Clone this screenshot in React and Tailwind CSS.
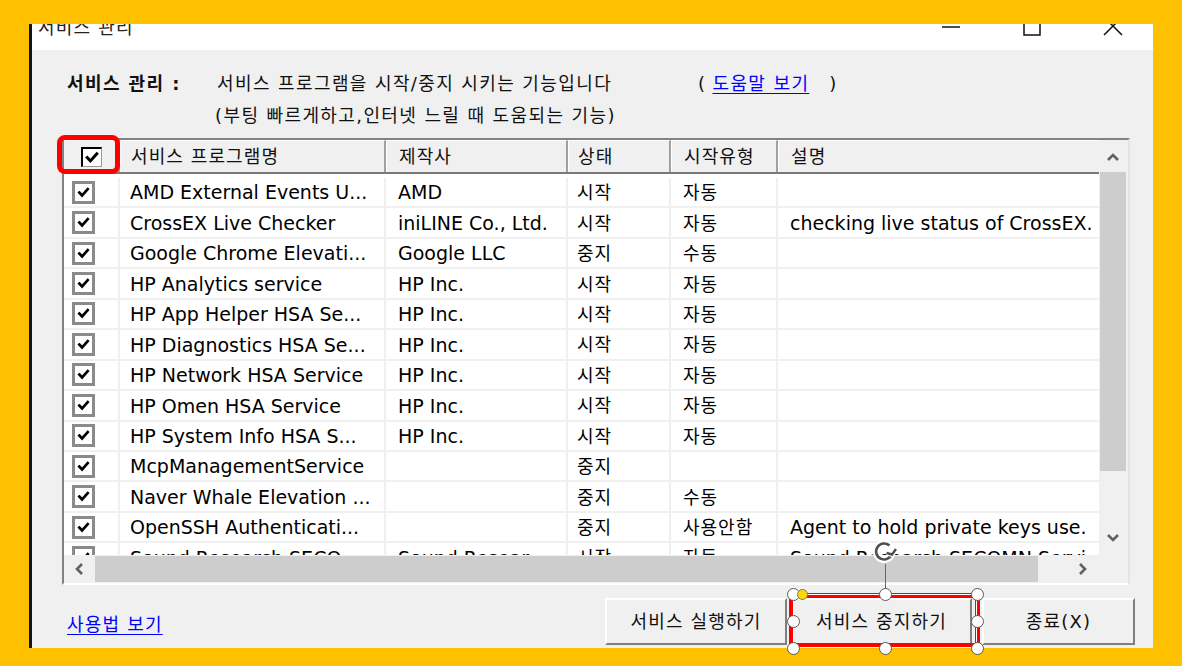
import React from 'react';

const rows = [
  ['AMD External Events U...', 'AMD', '시작', '자동', ''],
  ['CrossEX Live Checker', 'iniLINE Co., Ltd.', '시작', '자동', 'checking live status of CrossEX.'],
  ['Google Chrome Elevati...', 'Google LLC', '중지', '수동', ''],
  ['HP Analytics service', 'HP Inc.', '시작', '자동', ''],
  ['HP App Helper HSA Se...', 'HP Inc.', '시작', '자동', ''],
  ['HP Diagnostics HSA Se...', 'HP Inc.', '시작', '자동', ''],
  ['HP Network HSA Service', 'HP Inc.', '시작', '자동', ''],
  ['HP Omen HSA Service', 'HP Inc.', '시작', '자동', ''],
  ['HP System Info HSA S...', 'HP Inc.', '시작', '자동', ''],
  ['McpManagementService', '', '중지', '', ''],
  ['Naver Whale Elevation ...', '', '중지', '수동', ''],
  ['OpenSSH Authenticati...', '', '중지', '사용안함', 'Agent to hold private keys use.'],
  ['Sound Research SECO...', 'Sound Resear...', '시작', '자동', 'Sound Research SECOMN Servi...'],
];

// column widths + text inset, same for header and body
const cols = [
  'w-[56px]',
  'w-[266px] pl-[10px]',
  'w-[182px] pl-[12px]',
  'w-[103px] pl-[9px]',
  'w-[107px] pl-[12px]',
  'w-[330px] pl-[12px]',
];
const headers = ['서비스 프로그램명', '제작사', '상태', '시작유형', '설명'];

const Check = () => (
  <svg viewBox="0 0 16 16" className="w-full h-full">
    <path d="M3.5 8 L6.5 11.2 L12.5 4.5" stroke="#000" strokeWidth="2.8" fill="none" strokeLinecap="square" />
  </svg>
);

const RowBox = () => (
  <div className="w-[23px] h-[23px] border-[3px] border-[#8a8a8a] bg-white p-[1px]">
    <Check />
  </div>
);

const Chevron = ({ d, className }) => (
  <svg viewBox="0 0 14 14" className={className}>
    <path d={d} stroke="#606060" strokeWidth="2.6" fill="none" />
  </svg>
);

const Handle = ({ className }) => (
  <div className={`absolute w-[13px] h-[13px] rounded-full bg-white border-[1.5px] border-[#5a5a5a] ${className}`} />
);

const Btn = ({ children, className }) => (
  <button className={`h-[47px] bg-[#f0f0f0] border-t-2 border-l-2 border-white border-r-2 border-b-2 border-r-[#7f7f7f] border-b-[#7f7f7f] text-[18px] tracking-[1.2px] text-[#111] ${className}`}>
    {children}
  </button>
);

export default function App() {
  return (
    <div className="w-[1182px] h-[666px] bg-[#FFC000] pt-[24px] pl-[29px] pr-[29px] pb-[18px] font-['DejaVu_Sans','Noto_Sans_CJK_KR',sans-serif] text-black">
      <div className="h-full flex flex-col border-l-[3px] border-[#141414]">
        {/* title bar, cut at the top */}
        <div className="h-[26px] shrink-0 bg-white flex overflow-hidden">
          <div className="ml-[6px] mt-[-6px] text-[18px] leading-[20px] tracking-[1.2px] text-[#222]">서비스 관리</div>
          <div className="ml-auto flex">
            <div className="w-[81px] flex justify-center">
              <svg viewBox="0 0 20 20" className="w-[20px] h-[20px] mt-[-7px]">
                <path d="M1 10 H19" stroke="#111" strokeWidth="1.5" />
              </svg>
            </div>
            <div className="w-[81px] flex justify-center">
              <svg viewBox="0 0 20 20" className="w-[20px] h-[20px] mt-[-7px]">
                <rect x="2" y="1" width="16" height="17" stroke="#111" strokeWidth="1.5" fill="none" />
              </svg>
            </div>
            <div className="w-[81px] flex justify-center">
              <svg viewBox="0 0 20 20" className="w-[20px] h-[20px] mt-[-7px]">
                <path d="M1 0 L19 18 M19 0 L1 18" stroke="#111" strokeWidth="1.5" />
              </svg>
            </div>
          </div>
        </div>

        {/* body */}
        <div className="flex-1 bg-[#f0f0f0] flex flex-col pt-[18px] pb-[3px]">
          <div className="pl-[35px] text-[18px] leading-[32px] tracking-[1.4px] text-[#111]">
            <div className="flex">
              <span className="w-[150px] font-bold">서비스 관리 :</span>
              <span className="w-[481px]">서비스 프로그램을 시작/중지 시키는 기능입니다</span>
              <span>(</span>
              <a className="ml-[6px] text-[#0000ff] underline underline-offset-[3px]">도움말 보기</a>
              <span className="ml-[20px]">)</span>
            </div>
            <div className="pl-[148px]">(부팅 빠르게하고,인터넷 느릴 때 도움되는 기능)</div>
          </div>

          {/* list view */}
          <div className="relative mt-[6px] ml-[30px] w-[1068px] h-[447px] border-t-2 border-l-2 border-[#828282] border-r-2 border-b-2 border-r-[#e3e3e3] border-b-[#ffffff] flex flex-col">
            <div className="flex h-[415px]">
              <div className="w-[1035px] overflow-hidden flex flex-col">
                <div className="h-[34px] shrink-0 flex border-b-2 border-[#7a7a7a] bg-[#f0f0f0]">
                  <div className={`${cols[0]} shrink-0 flex items-center pl-[17px] border-t border-white border-r-2 border-r-[#a0a0a0]`}>
                    <div className="w-[21px] h-[20px] bg-white border-t-2 border-l-2 border-black border-r border-b border-r-[#9a9a9a] border-b-[#9a9a9a]">
                      <Check />
                    </div>
                  </div>
                  {headers.map((h, i) => (
                    <div key={h} className={`${cols[i + 1]} shrink-0 flex items-center text-[18px] tracking-[1.1px] text-[#111] border-t border-l border-white border-r-2 border-r-[#a0a0a0] whitespace-nowrap`}>
                      {h}
                    </div>
                  ))}
                </div>
                <div className="flex-1 bg-white pt-[4px] overflow-hidden">
                  {rows.map((r, ri) => (
                    <div key={ri} className="h-[30.45px] shrink-0 flex border-b-2 border-[#f0f0f0]">
                      <div className={`${cols[0]} shrink-0 flex items-center pl-[8px] border-r-2 border-[#f0f0f0]`}>
                        <RowBox />
                      </div>
                      {r.map((c, ci) => (
                        <div
                          key={ci}
                          className={`${cols[ci + 1]} shrink-0 flex items-center pt-[1px] whitespace-nowrap overflow-hidden border-r-2 border-[#f0f0f0] ${ci === 2 || ci === 3 ? 'text-[18px] tracking-[1px]' : 'text-[19px]'}`}
                        >
                          {c}
                        </div>
                      ))}
                    </div>
                  ))}
                </div>
              </div>
              {/* vertical scrollbar */}
              <div className="w-[29px] bg-[#f0f0f0] flex flex-col pt-[1px] pr-[2px] pl-[1px]">
                <div className="h-[31px] flex items-center justify-center">
                  <Chevron d="M2 10 L7 5 L12 10" className="w-[14px] h-[14px]" />
                </div>
                <div className="h-[299px] bg-[#cdcdcd]" />
                <div className="flex-1 flex items-end justify-center pb-[10px]">
                  <Chevron d="M2 4 L7 9 L12 4" className="w-[14px] h-[14px]" />
                </div>
              </div>
            </div>
            {/* horizontal scrollbar */}
            <div className="flex h-[28px]">
              <div className="w-[1035px] flex bg-[#f0f0f0] py-[1px]">
                <div className="w-[31px] flex items-center justify-center">
                  <Chevron d="M9 2 L4 7 L9 12" className="w-[14px] h-[14px]" />
                </div>
                <div className="w-[943px] bg-[#cdcdcd]" />
                <div className="flex-1 flex items-center justify-end pr-[10px]">
                  <Chevron d="M5 2 L10 7 L5 12" className="w-[14px] h-[14px]" />
                </div>
              </div>
              <div className="flex-1 bg-[#f0f0f0]" />
            </div>
            {/* red highlight around the header checkbox */}
            <div className="absolute left-[-7px] top-[-5px] w-[63px] h-[39px] border-[5px] border-[#ff0000] rounded-[8px]" />
          </div>

          {/* bottom bar */}
          <div className="mt-[13px] h-[47px] flex items-start pl-[35px] pr-[18px]">
            <a className="mt-[15px] text-[18px] leading-[24px] tracking-[1.2px] text-[#0000ff] underline underline-offset-[3px]">사용법 보기</a>
            <div className="ml-auto flex">
              <Btn className="w-[182px]">서비스 실행하기</Btn>
              <div className="relative ml-[4px]">
                <Btn className="w-[181px]">서비스 중지하기</Btn>
                <div className="absolute left-[-2px] top-[-5px] w-[191px] h-[55px] border-[5px] border-[#ff0000] rounded-[2px]" />
                <div className="absolute left-[2px] top-[-4px] w-[184px] h-[54px] border border-white" />
                <div className="absolute left-[94px] top-[-34px] w-px h-[30px] bg-[#666]" />
                <svg viewBox="0 0 26 26" className="absolute left-[81px] top-[-59px] w-[26px] h-[26px]">
                  <path d="M20 14 A8 8 0 1 1 17.5 6.5" stroke="#fff" strokeWidth="7" fill="none" />
                  <path d="M20 14 A8 8 0 1 1 17.5 6.5" stroke="#505050" strokeWidth="2.6" fill="none" />
                  <path d="M14.5 14 L20 15.5 L24 10" stroke="#fff" strokeWidth="5" fill="none" />
                  <path d="M14.5 14 L20 15.5 L24 10" stroke="#505050" strokeWidth="2.4" fill="none" />
                </svg>
                <Handle className="left-[-4px] top-[-10px]" />
                <Handle className="left-[88px] top-[-10px]" />
                <Handle className="left-[180px] top-[-10px]" />
                <Handle className="left-[-4px] top-[17px]" />
                <Handle className="left-[180px] top-[17px]" />
                <Handle className="left-[-4px] top-[44px]" />
                <Handle className="left-[88px] top-[44px]" />
                <Handle className="left-[180px] top-[44px]" />
                <div className="absolute left-[6px] top-[-9px] w-[11px] h-[11px] rounded-full bg-[#ffd800] border border-[#777]" />
              </div>
              <Btn className="w-[153px] ml-[10px]">종료(X)</Btn>
            </div>
          </div>
        </div>
      </div>
    </div>
  );
}
